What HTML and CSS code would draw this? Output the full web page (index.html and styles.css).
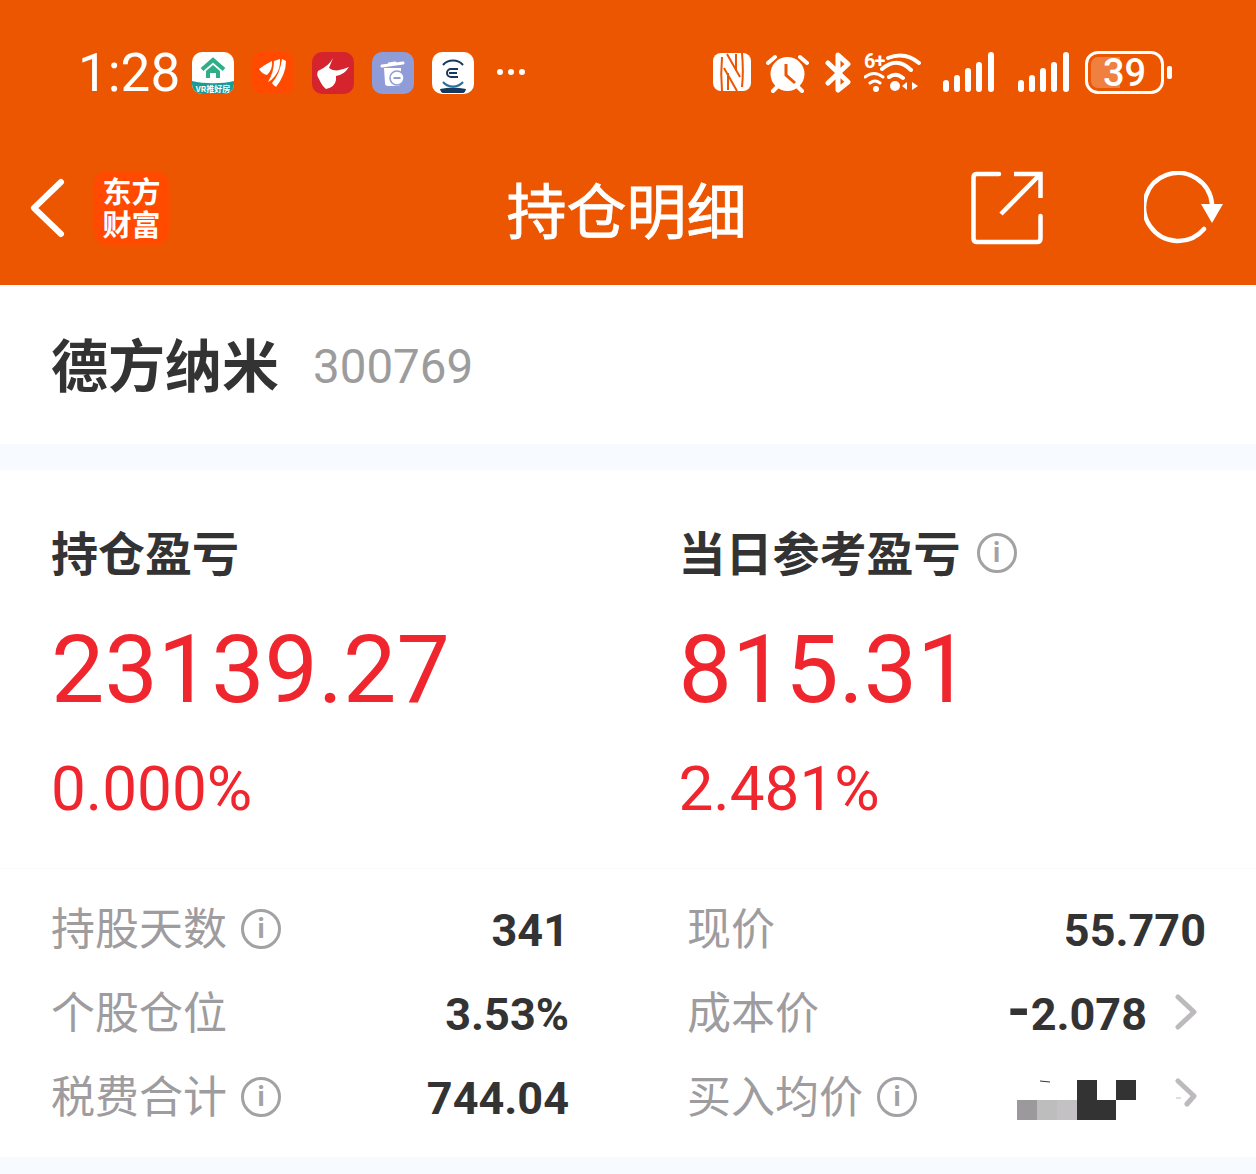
FILE: index.html
```html
<!DOCTYPE html>
<html lang="zh-CN">
<head>
    <meta charset="UTF-8">
    <meta name="viewport" content="width=device-width, initial-scale=1.0">
    <title>持仓明细</title>
    <link rel="stylesheet" href="styles.css">
</head>
<body>
    <header class="top">
        <div class="status">
            <div class="status-left">
                <span class="time">1:28</span>
                <svg class="app-icon" viewBox="0 0 42 42">
                    <rect width="42" height="42" rx="10" fill="#fff"/>
                    <path d="M0 29c12 3 30 3 42 0v3a10 10 0 0 1-10 10H10A10 10 0 0 1 0 32z" fill="#1c9a98"/>
                    <path d="M10 17.500L21 8L32 17.500" fill="none" stroke="#2fae87" stroke-width="4"/>
                    <path d="M14 19L21 13L28 19V26H24V21H18V26H14z" fill="#2fae87"/>
                    <text x="21" y="39.500" class="app-text" font-size="8">VR推好房</text>
                </svg>
                <svg class="app-icon" viewBox="0 0 42 42">
                    <rect width="42" height="42" rx="10" fill="#ff4a00"/>
                    <path d="M7 17Q14 12 20 9Q21 17 15 23Q10 22 7 17z" fill="#fff"/>
                    <path d="M22 9L28 7Q29 16 23 24Q20 28 16 30Q22 20 22 9z" fill="#fff"/>
                    <path d="M30 7L34 9Q34 22 24 35Q21 33 20 31Q28 22 30 7z" fill="#fff"/>
                </svg>
                <svg class="app-icon" viewBox="0 0 42 42">
                    <rect width="42" height="42" rx="10" fill="#d5242e"/>
                    <path d="M21 6Q17 14 6 19Q4 23 7 27Q10 34 14 37Q23 35 24 28L24 24Q32 23 37 15Q30 18 25 18.500Q20 18.500 17 16Q19 11 21 6z" fill="#fff"/>
                </svg>
                <svg class="app-icon" viewBox="0 0 42 42">
                    <rect width="42" height="42" rx="10" fill="#8f9cd8"/>
                    <path d="M10 14L31 11M17 12L23 11" stroke="#fff" stroke-width="3" stroke-linecap="round"/>
                    <path d="M12 16H29V31C29 33 27 34 26 34H16C14 34 13 33 13 31z" fill="#fff"/>
                    <circle cx="25" cy="26" r="7" fill="#fff" stroke="#8f9cd8" stroke-width="1.500"/>
                    <path d="M21.500 26H28.500" stroke="#8f9cd8" stroke-width="2"/>
                </svg>
                <svg class="app-icon" viewBox="0 0 42 42">
                    <rect width="42" height="42" rx="10" fill="#fff"/>
                    <path d="M11 13C16 7 26 7 31 13" fill="none" stroke="#16395f" stroke-width="2"/>
                    <path d="M11 30C16 36 26 36 31 30" fill="none" stroke="#2a6f9b" stroke-width="2"/>
                    <path d="M26 17H19A4 4 0 0 0 19 25H26M17 21H25" fill="none" stroke="#16395f" stroke-width="2"/>
                    <path d="M8 37Q21 34 34 37Q33 41 31 41H11Q9 41 8 37z" fill="#16395f"/>
                </svg>
                <span class="more"><i></i><i></i><i></i></span>
            </div>
            <div class="status-right">
                <svg class="nfc" width="38" height="42" viewBox="0 0 38 42">
                    <rect y="1" width="38" height="38" rx="8" fill="#fff"/>
                    <g fill="none" stroke="#ec5600" stroke-width="2">
                        <path d="M9 5C8 16 8 28 9 39M29 1C30 12 30 26 29 35"/>
                        <path d="M14 2L27 25M11 16L24 39M15 21V38M23 2V19"/>
                    </g>
                </svg>
                <svg class="alarm" width="44" height="42" viewBox="0 0 44 42">
                    <circle cx="21.500" cy="22" r="17" fill="#fff"/>
                    <path d="M2 11L9 5M41 11L34 5M7 39L11 35M36 39L32 35" stroke="#fff" stroke-width="4" stroke-linecap="round"/>
                    <path d="M20 12V23L29 31" fill="none" stroke="#ec5600" stroke-width="3"/>
                </svg>
                <svg class="bluetooth" width="26" height="42" viewBox="0 0 26 42">
                    <path d="M3 11L23 30L13 38V3L23 12L3 31" fill="none" stroke="#fff" stroke-width="5" stroke-linecap="round" stroke-linejoin="round"/>
                </svg>
                <div class="wifi">
                    <span class="wifi-six">6+</span>
                    <svg width="58" height="42" viewBox="0 0 58 42">
                        <path d="M24 6Q41 -1 55 11M18 17Q33 4 47 18M25 25Q32 20 39 26" fill="none" stroke="#fff" stroke-width="4" stroke-linecap="round"/>
                        <path d="M1 25Q10 18 19 25M6 31Q11 27 16 31" fill="none" stroke="#fff" stroke-width="3" stroke-linecap="round"/>
                        <circle cx="12" cy="37" r="3" fill="#fff"/>
                        <circle cx="31" cy="34" r="5" fill="#fff"/>
                        <path d="M38 34L43 30V38zM48 30L54 34L48 38z" fill="#fff"/>
                    </svg>
                </div>
                <svg class="signal" width="52" height="42" viewBox="0 0 52 42">
                    <rect y="28" width="6" height="12" rx="3" fill="#fff"/>
                    <rect x="11" y="23" width="6" height="17" rx="3" fill="#fff"/>
                    <rect x="22" y="16" width="6" height="24" rx="3" fill="#fff"/>
                    <rect x="33" y="10" width="6" height="30" rx="3" fill="#fff"/>
                    <rect x="45" width="6" height="40" rx="3" fill="#fff"/>
                </svg>
                <svg class="signal" width="52" height="42" viewBox="0 0 52 42">
                    <rect y="28" width="6" height="12" rx="3" fill="#fff"/>
                    <rect x="11" y="23" width="6" height="17" rx="3" fill="#fff"/>
                    <rect x="22" y="16" width="6" height="24" rx="3" fill="#fff"/>
                    <rect x="33" y="10" width="6" height="30" rx="3" fill="#fff"/>
                    <rect x="45" width="6" height="40" rx="3" fill="#fff"/>
                </svg>
                <div class="battery">
                    <div class="battery-body">
                        <div class="battery-level"></div>
                        <span class="battery-num">39</span>
                    </div>
                    <div class="battery-cap"></div>
                </div>
            </div>
        </div>
        <nav class="nav">
            <div class="nav-left">
                <svg width="38" height="62" viewBox="0 0 38 62">
                    <path d="M32 5L5 31L32 57" fill="none" stroke="#fff" stroke-width="6" stroke-linecap="round" stroke-linejoin="round"/>
                </svg>
                <div class="logo">东方<br>财富</div>
            </div>
            <div class="nav-title">持仓明细</div>
            <div class="nav-right">
                <svg width="72" height="74" viewBox="0 0 72 74">
                    <path d="M28 3H6Q2.500 3 2.500 6.500V67.500Q2.500 71 6 71H66Q69.500 71 69.500 67.500V45" fill="none" stroke="#fff" stroke-width="4.500" stroke-linecap="round"/>
                    <path d="M43 3H69.500V27M69 3.500L30 43" fill="none" stroke="#fff" stroke-width="4.500"/>
                </svg>
                <svg width="80" height="74" viewBox="0 0 80 74">
                    <path d="M68 33A34 34 0 1 0 60 58" fill="none" stroke="#fff" stroke-width="4.500" stroke-linecap="round"/>
                    <path d="M57 33H79L68 52z" fill="#fff"/>
                </svg>
            </div>
        </nav>
    </header>

    <section class="stock">
        <span class="stock-name">德方纳米</span>
        <span class="stock-code">300769</span>
    </section>

    <section class="detail">
        <div class="summary">
            <div class="summary-col">
                <div class="summary-label">持仓盈亏</div>
                <div class="summary-value">23139.27</div>
                <div class="summary-pct">0.000%</div>
            </div>
            <div class="summary-col">
                <div class="summary-label">当日参考盈亏<span class="info info-title">i</span></div>
                <div class="summary-value">815.31</div>
                <div class="summary-pct">2.481%</div>
            </div>
        </div>
        <div class="stats">
            <div class="stat">
                <div class="stat-label">持股天数<span class="info">i</span></div>
                <div class="stat-value">341</div>
            </div>
            <div class="stat">
                <div class="stat-label">现价</div>
                <div class="stat-value">55.770</div>
            </div>
            <div class="stat">
                <div class="stat-label">个股仓位</div>
                <div class="stat-value">3.53%</div>
            </div>
            <div class="stat">
                <div class="stat-label">成本价</div>
                <div class="stat-value with-arrow"><span class="minus">-</span>2.078</div>
                <svg class="arrow" width="22" height="36" viewBox="0 0 22 36">
                    <path d="M3 3L19 18L3 33" fill="none" stroke="#bdbabd" stroke-width="5" stroke-linecap="round" stroke-linejoin="round"/>
                </svg>
            </div>
            <div class="stat">
                <div class="stat-label">税费合计<span class="info">i</span></div>
                <div class="stat-value">744.04</div>
            </div>
            <div class="stat">
                <div class="stat-label">买入均价<span class="info">i</span></div>
                <svg class="mosaic" width="120" height="42" viewBox="0 0 120 42">
                    <path d="M23 2L33 3" stroke="#333" stroke-width="1"/>
                    <rect y="21" width="20" height="20" fill="#9b999b"/>
                    <rect x="20" y="21" width="20" height="20" fill="#bdbdbd"/>
                    <rect x="40" y="21" width="20" height="20" fill="#c3c1c3"/>
                    <rect x="60" y="1" width="20" height="40" fill="#333"/>
                    <rect x="80" y="21" width="19" height="20" fill="#333"/>
                    <rect x="99" y="1" width="20" height="20" fill="#333"/>
                </svg>
                <svg class="arrow" width="22" height="36" viewBox="0 0 22 36">
                    <path d="M3 3L19 18L12 26" fill="none" stroke="#bdbabd" stroke-width="5" stroke-linecap="round" stroke-linejoin="round"/>
                    <path d="M1 20H6" stroke="#bdbabd" stroke-width="1"/>
                </svg>
            </div>
        </div>
    </section>
    <div class="band"></div>
</body>
</html>
```

FILE: styles.css
```css
* {
    box-sizing: border-box;
}
html, body {
    height: 1174px;
    overflow: hidden;
}
body {
    margin: 0;
    padding: 0;
    background-color: #fff;
    font-family: Roboto, "Noto Sans CJK SC", sans-serif;
}
.top {
    background-color: #ec5600;
    color: white;
    height: 285px;
}
.status {
    height: 145px;
    padding: 52px 84px 0 78px;
    display: flex;
    justify-content: space-between;
    align-items: flex-start;
}
.status-left {
    display: flex;
    align-items: center;
    gap: 18px;
    height: 42px;
}
.time {
    font-size: 53px;
    line-height: 42px;
    margin-right: -6px;
}
.app-icon {
    width: 42px;
    height: 42px;
}
.app-text {
    fill: #fff;
    text-anchor: middle;
    font-family: "Noto Sans CJK SC", sans-serif;
    font-weight: bold;
}
.more {
    display: flex;
    gap: 5px;
    margin-left: 5px;
    margin-top: -2px;
}
.more i {
    width: 6px;
    height: 6px;
    border-radius: 50%;
    background-color: white;
}
.status-right {
    display: flex;
    align-items: flex-start;
    height: 42px;
}
.nfc, .alarm {
    margin-right: 15px;
}
.bluetooth {
    margin-right: 13px;
}
.wifi {
    position: relative;
    width: 58px;
    height: 42px;
    margin-right: 21px;
}
.wifi-six {
    position: absolute;
    left: 0;
    top: -1px;
    font-size: 20px;
    line-height: 20px;
    font-weight: bold;
    letter-spacing: -1px;
}
.signal {
    margin-right: 23px;
}
.signal + .battery {
    margin-left: -8px;
}
.battery {
    display: flex;
    align-items: center;
    gap: 3px;
    height: 43px;
    margin-top: -1px;
}
.battery-body {
    position: relative;
    width: 79px;
    height: 43px;
    border: 3px solid white;
    border-radius: 13px;
    padding: 3px;
    display: flex;
    align-items: center;
    justify-content: center;
}
.battery-level {
    position: absolute;
    left: 3px;
    top: 3px;
    bottom: 3px;
    width: 29px;
    background-color: #f0803f;
    border-radius: 7px 0 0 7px;
}
.battery-num {
    position: relative;
    font-size: 38px;
    line-height: 36px;
    font-weight: 500;
}
.battery-cap {
    width: 5px;
    height: 13px;
    border-radius: 2px;
    background-color: white;
}
.nav {
    height: 140px;
    padding: 0 32px 14px 29px;
    display: grid;
    grid-template-columns: 1fr auto 1fr;
    align-items: center;
}
.nav-left {
    display: flex;
    align-items: center;
    gap: 27px;
}
.logo {
    width: 75px;
    height: 74px;
    background-color: #ff4a00;
    border-radius: 14px;
    font-family: "Noto Sans CJK SC", sans-serif;
    font-size: 29px;
    line-height: 33px;
    font-weight: bold;
    padding-top: 3px;
    text-align: center;
}
.nav-title {
    font-family: "Noto Sans CJK SC", sans-serif;
    font-size: 60px;
    line-height: 74px;
    -webkit-text-stroke: 0.8px white;
}
.nav-right {
    display: flex;
    justify-content: flex-end;
    align-items: center;
    gap: 101px;
}
.stock {
    height: 159px;
    display: flex;
    align-items: center;
    padding-left: 51px;
    gap: 34px;
}
.stock-name {
    font-family: "Noto Sans CJK SC", sans-serif;
    font-size: 57px;
    font-weight: bold;
    color: #333;
    margin-bottom: 6px;
}
.stock-code {
    font-size: 47.500px;
    color: #9c9c9c;
    margin-top: 4px;
}
.detail {
    border-top: 26px solid #f7fafe;
    height: 713px;
}
.summary {
    display: grid;
    grid-template-columns: 627.500px 1fr;
    padding: 54px 52px 0 51px;
    height: 399px;
    border-bottom: 1px solid #fbfbfb;
}
.summary-label {
    display: flex;
    align-items: center;
    height: 60px;
    padding-bottom: 6px;
    font-family: "Noto Sans CJK SC", sans-serif;
    font-size: 47px;
    line-height: 54px;
    font-weight: bold;
    color: #333;
}
.summary-value {
    margin-top: 31px;
    font-size: 95px;
    line-height: 110px;
    color: #f0262e;
}
.summary-pct {
    margin-top: 29px;
    font-size: 62px;
    line-height: 70px;
    color: #f0262e;
}
.info {
    width: 40px;
    height: 40px;
    margin-left: 16px;
    margin-top: 6px;
    border: 3.500px solid #a3a1a3;
    border-radius: 50%;
    display: inline-flex;
    align-items: center;
    justify-content: center;
    font-family: Roboto, sans-serif;
    font-size: 27px;
    line-height: 30px;
    font-weight: bold;
    color: #a3a1a3;
}
.info-title {
    margin-top: 4px;
}
.stats {
    display: grid;
    grid-template-columns: 518px 519px;
    column-gap: 118px;
    padding: 19px 0 0 51px;
}
.stat {
    height: 84px;
    display: flex;
    align-items: center;
    justify-content: space-between;
    position: relative;
}
.stat-label {
    display: flex;
    align-items: center;
    padding-bottom: 8px;
    font-family: "Noto Sans CJK SC", sans-serif;
    font-size: 44px;
    color: #9e9c9e;
}
.stat-label .info {
    margin-left: 14px;
}
.stat-value {
    font-size: 45px;
    font-weight: bold;
    color: #333;
}
.minus {
    font-size: 60px;
    line-height: 0;
}
.with-arrow {
    margin-right: 59px;
    margin-left: auto;
}
.arrow {
    position: absolute;
    right: 9px;
    top: 22px;
}
.mosaic {
    margin-left: auto;
    margin-right: 69px;
    margin-top: 4px;
}
.band {
    height: 17px;
    background-color: #f7fafe;
}
```
